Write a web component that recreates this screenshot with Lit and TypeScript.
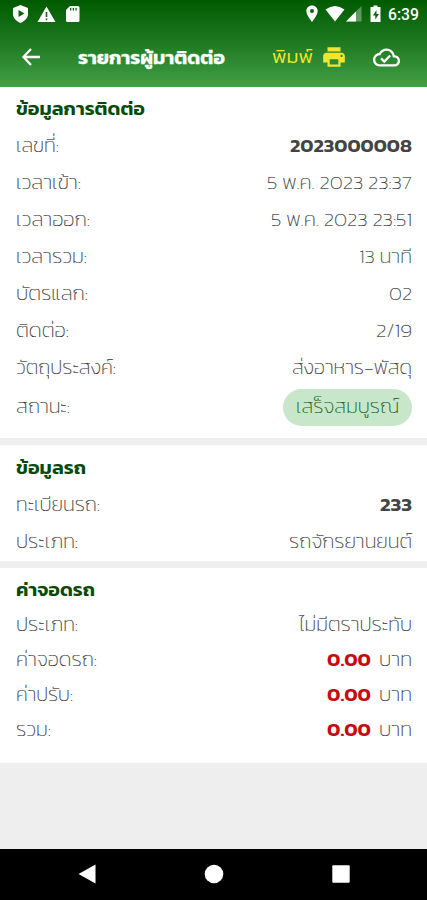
import { LitElement, html, css } from "lit";
import { customElement, property } from "lit/decorators.js";

/** Single line of text, stretched horizontally to a given width. */
@customElement("fit-text")
class FitText extends LitElement {
  @property() text = "";
  @property({ type: Number }) w = 0;
  static styles = css`
    :host { display: block; flex: none; white-space: pre; }
    .t { display: inline-block; transform-origin: 0 50%; }
  `;
  render() { return html`<span class="t">${this.text}</span>`; }
  updated() {
    const t = this.renderRoot.querySelector(".t") as HTMLElement;
    t.style.transform = "none";
    const n = t.getBoundingClientRect().width;
    this.style.width = this.w + "px";
    if (n) t.style.transform = `scaleX(${this.w / n})`;
  }
}

type Row = { l: string; lw: number; v: string; vw: number; kind?: string };

const contact: Row[] = [
  { l: "เลขที่:", lw: 43, v: "2023000008", vw: 122, kind: "bold" },
  { l: "เวลาเข้า:", lw: 65, v: "5 พ.ค. 2023 23:37", vw: 145 },
  { l: "เวลาออก:", lw: 74, v: "5 พ.ค. 2023 23:51", vw: 141 },
  { l: "เวลารวม:", lw: 71, v: "13 นาที", vw: 53, kind: "green" },
  { l: "บัตรแลก:", lw: 72, v: "02", vw: 23 },
  { l: "ติดต่อ:", lw: 53, v: "2/19", vw: 36 },
  { l: "วัตถุประสงค์:", lw: 100, v: "ส่งอาหาร-พัสดุ", vw: 120 },
  { l: "สถานะ:", lw: 54, v: "เสร็จสมบูรณ์", vw: 103, kind: "badge" },
];
const car: Row[] = [
  { l: "ทะเบียนรถ:", lw: 84, v: "233", vw: 32, kind: "bold" },
  { l: "ประเภท:", lw: 62, v: "รถจักรยานยนต์", vw: 123 },
];
const fee: Row[] = [
  { l: "ประเภท:", lw: 62, v: "ไม่มีตราประทับ", vw: 113 },
  { l: "ค่าจอดรถ:", lw: 81, v: "0.00", vw: 44, kind: "money" },
  { l: "ค่าปรับ:", lw: 57, v: "0.00", vw: 44, kind: "money" },
  { l: "รวม:", lw: 35, v: "0.00", vw: 44, kind: "money" },
];

@customElement("app-root")
class AppRoot extends LitElement {
  static styles = css`
    :host {
      display: flex; flex-direction: column; width: 100%; height: 900px; overflow: hidden;
      background: #eee; color: #333;
      font: 200 19px/26px Kanit, Prompt, Inter, "Noto Sans Thai", "Noto Sans", sans-serif;
    }
    svg { display: block; flex: none; }
    .top { height: 86.5px; flex: none; color: #fff; background: linear-gradient(#005a00, #1f7a22 50%, #43a047); }
    .status { height: 28px; display: flex; align-items: center; padding: 0 8px 0 12px; }
    .clock { font: 500 17px/1 Roboto, sans-serif; margin-left: 6px; }
    .grow { flex: 1; }
    .bar { height: 58px; display: flex; align-items: center; padding: 0 27px 0 20px; }
    .title { font-weight: 600; font-size: 18px; margin: 1px 0 0 36px; -webkit-text-stroke: .3px #fff; }
    .print { color: #f1e52f; font-weight: 300; font-size: 18.5px; margin: 0 8px 0 0; }
    .cloud { margin-left: 26px; }
    .card { background: #fff; flex: none; padding: 0 15px 0 16px; box-sizing: border-box; margin-bottom: 7px; }
    .contact { height: 351.5px; }
    .car { height: 116px; }
    .fee { height: 195px; margin: 0; }
    .head { height: 41px; padding-top: 4px; box-sizing: border-box; display: flex; align-items: center; color: #064a0a; font-weight: 600; font-size: 18.5px; }
    .car .head { height: 41.5px; padding-top: 5px; }
    .fee .head { height: 39.5px; padding-top: 5px; }
    .row { height: 37px; display: flex; align-items: center; justify-content: space-between; -webkit-text-stroke: .22px currentColor; }
    .fee .row { height: 35px; }
    .contact .tall { height: 41.5px; }
    .bold { font-weight: 600; color: #444; -webkit-text-stroke: 0; }
    .green { color: #1c5624; }
    .badge { background: #c8e6c9; color: #0d5a18; height: 37px; padding: 0 13px; border-radius: 19px; display: flex; align-items: center; }
    .green, .badge { -webkit-text-stroke: .22px currentColor; }
    .money { display: flex; align-items: center; gap: 8px; }
    .red { color: #c80a10; font-weight: 600; -webkit-text-stroke: 0; }
    .nav { height: 51.5px; background: #000; margin-top: auto; display: grid; grid-template-columns: repeat(3, 127px); justify-content: center; place-items: center; flex: none; }
  `;

  value(r: Row) {
    if (r.kind === "money")
      return html`<div class="money"><fit-text class="red" .text=${r.v} .w=${r.vw}></fit-text><fit-text .text=${"บาท"} .w=${33}></fit-text></div>`;
    return html`<div class=${r.kind ?? "plain"}><fit-text .text=${r.v} .w=${r.vw}></fit-text></div>`;
  }

  card(cls: string, title: string, w: number, rows: Row[]) {
    return html`<section class="card ${cls}">
      <div class="head"><fit-text .text=${title} .w=${w}></fit-text></div>
      ${rows.map((r) => html`<div class="row ${r.kind === "badge" ? "tall" : ""}">
        <fit-text .text=${r.l} .w=${r.lw}></fit-text>${this.value(r)}
      </div>`)}
    </section>`;
  }

  render() {
    return html`
      <header class="top">
        <div class="status">
          <svg width="70" height="20" viewBox="0 0 70 20" fill="#fff">
            <path fill-rule="evenodd" d="M8.5 1 16 4v6c0 4-3 7-7.500 9C4 17 1 14 1 10V4zM6.500 6v7l6-3.500z"/>
            <path fill-rule="evenodd" d="M34.500 2.500 43.500 18H25.500zM33.700 8v5h1.600V8zM33.700 14.500v1.700h1.600v-1.700z"/>
            <path fill-rule="evenodd" d="M58 2h8q1.500 0 1.500 1.500v13q0 1.500-1.500 1.500H55.500Q54 18 54 16.500V6zM58 4v2.500h1.300V4zM60.700 4v2.500H62V4zM63.400 4v2.500h1.300V4z"/>
          </svg>
          <span class="grow"></span>
          <svg width="78" height="20" viewBox="-1 0 78 20" fill="#fff">
            <path fill-rule="evenodd" d="M7 1.500c-3.500 0-5.700 2.500-5.700 5.500C1.300 11 7 18 7 18s5.700-7 5.700-11c0-3-2.200-5.500-5.700-5.500zM7 5a2 2 0 1 1 0 4 2 2 0 0 1 0-4z"/>
            <path d="M20.500 5.500q9.500-7 19 0L30 17.500z"/>
            <path d="M56.500 2v15.500H41z" opacity=".35"/><path d="M51 7.500v10h-10z"/>
            <path fill-rule="evenodd" d="M68.500 1.500h4V3h3v15h-10V3h3zM71.500 6 68 11.500h2.300V15.500L74 10h-2.500z"/>
          </svg>
          <fit-text class="clock" .text=${"6:39"} .w=${31}></fit-text>
        </div>
        <div class="bar">
          <svg width="22" height="20" viewBox="0 0 22 20" fill="none" stroke="#fff" stroke-width="2.300"><path d="M20 10H4M11 2 3.500 10 11 18"/></svg>
          <fit-text class="title" .text=${"รายการผู้มาติดต่อ"} .w=${147}></fit-text>
          <span class="grow"></span>
          <fit-text class="print" .text=${"พิมพ์"} .w=${41}></fit-text>
          <svg width="26" height="26" viewBox="0 0 24 24" fill="#f1e52f"><path d="M19 8H5c-1.660 0-3 1.340-3 3v6h4v4h12v-4h4v-6c0-1.660-1.340-3-3-3zm-3 11H8v-5h8v5zm3-7c-.55 0-1-.45-1-1s.45-1 1-1 1 .45 1 1-.45 1-1 1zm-1-9H6v4h12V3z"/></svg>
          <svg class="cloud" width="27" height="27" viewBox="0 0 24 24" fill="#fff"><path d="M19.350 10.040C18.670 6.590 15.640 4 12 4 9.110 4 6.600 5.640 5.350 8.040 2.340 8.360 0 10.910 0 14c0 3.310 2.690 6 6 6h13c2.760 0 5-2.240 5-5 0-2.640-2.050-4.780-4.650-4.960zM19 18H6c-2.210 0-4-1.790-4-4 0-2.050 1.530-3.760 3.560-3.970l1.070-.11.5-.95C8.080 7.140 9.940 6 12 6c2.620 0 4.880 1.860 5.390 4.430l.3 1.500 1.530.11C20.780 12.140 22 13.450 22 15c0 1.650-1.350 3-3 3zm-9-3.820-2.090-2.090L6.500 13.500 10 17l6.010-6.010-1.410-1.410z"/></svg>
        </div>
      </header>
      ${this.card("contact", "ข้อมูลการติดต่อ", 129, contact)}
      ${this.card("car", "ข้อมูลรถ", 70, car)}
      ${this.card("fee", "ค่าจอดรถ", 79, fee)}
      <nav class="nav">
        <svg width="18" height="20" viewBox="0 0 18 20" fill="#fff"><path d="M17.500 .5v19L.5 10z"/></svg>
        <svg width="20" height="20" viewBox="0 0 20 20" fill="#fff"><circle cx="10" cy="10" r="9.300"/></svg>
        <svg width="18" height="18" viewBox="0 0 18 18" fill="#fff"><rect x=".3" y=".3" width="17.400" height="17.400" rx="1"/></svg>
      </nav>`;
  }
}
